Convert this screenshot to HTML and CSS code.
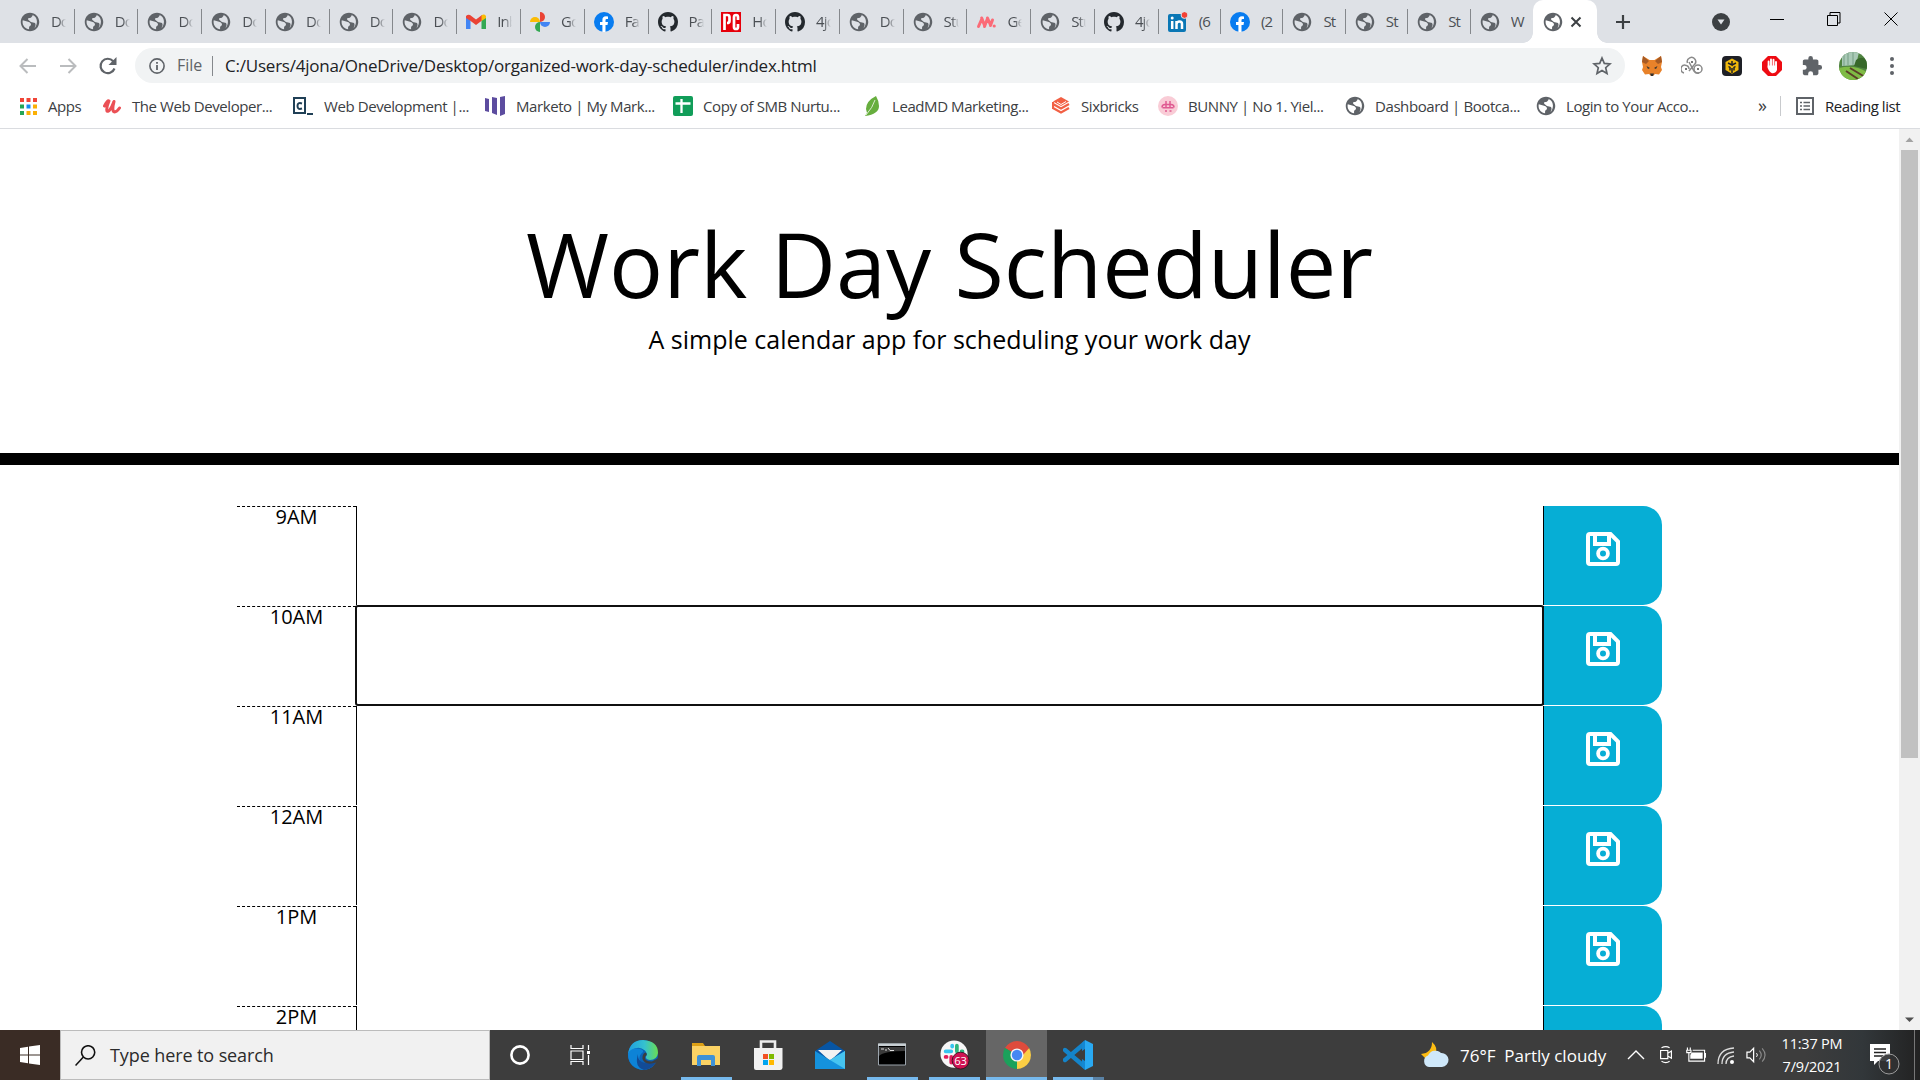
FILE: index.html
```html
<!DOCTYPE html>
<html lang="en">
<head>
<meta charset="utf-8">
<title>Work Day Scheduler</title>
<link rel="stylesheet" href="styles.css">
</head>
<body>
<svg class="defs" width="0" height="0">
  <symbol id="globe" viewBox="1.200 1.200 21.600 21.600"><path fill="#5f6368" d="M12 2C6.480 2 2 6.480 2 12s4.480 10 10 10 10-4.480 10-10S17.520 2 12 2zm-1 17.930c-3.950-.49-7-3.850-7-7.930 0-.62.080-1.210.210-1.790L9 11.500Q12 12 13 14v1c0 1.100-2 1.500-2 2.600v2.330zm6-1.900q2-3 .5-5.030l-4.500-1-3-2.500v-1.500l3-.5 2-2.500-1-.9c3.500.8 5.500 4 5.500 7.400 0 2.600-1 5-2 6.530z"/></symbol>
  <symbol id="github" viewBox="0 0 16 16"><path fill="#24292e" fill-rule="evenodd" d="M8 0C3.580 0 0 3.580 0 8c0 3.540 2.290 6.530 5.470 7.590.4.070.55-.17.55-.38 0-.19-.01-.82-.01-1.490-2.010.37-2.530-.49-2.690-.94-.09-.23-.48-.94-.82-1.130-.28-.15-.68-.52-.01-.53.63-.01 1.080.58 1.230.82.72 1.210 1.870.87 2.330.66.070-.52.280-.87.510-1.070-1.780-.2-3.640-.89-3.640-3.950 0-.87.310-1.590.82-2.150-.08-.2-.36-1.020.08-2.120 0 0 .67-.21 2.200.82.64-.18 1.320-.27 2-.27s1.360.09 2 .27c1.530-1.040 2.200-.82 2.200-.82.44 1.100.16 1.920.08 2.120.51.56.82 1.270.82 2.150 0 3.070-1.870 3.750-3.650 3.950.29.25.54.73.54 1.480 0 1.070-.01 1.930-.01 2.200 0 .21.15.46.55.38A8.010 8.010 0 0 0 16 8c0-4.420-3.580-8-8-8z"/></symbol>
  <symbol id="facebook" viewBox="0 0 20 20"><circle cx="10" cy="10" r="10" fill="#087cf0"/><path d="M8.400 20V13H6V10H8.400V8Q8.400 4.300 12 4.300L14 4.500V7H12.600Q11.500 7 11.500 8.200V10H14L13.500 13H11.500V20Z" fill="#fff"/></symbol>
  <symbol id="gmail" viewBox="0 0 20 16"><path d="M0 2V15H4.500V6Z" fill="#4285f4"/><path d="M15.500 6V15H20V2Z" fill="#34a853"/><path d="M0 2Q2 0 4 1L10 5.500 16 1V6.500L10 11 4 6.500 0 4Z" fill="#ea4335"/><path d="M15.500 1.500Q18-.5 20 2V4L15.500 7Z" fill="#fbbc04"/></symbol>
  <symbol id="photos" viewBox="0 0 20 20"><path d="M10 0A5 5 0 0 1 10 10Z" fill="#ea4335"/><path d="M20 10A5 5 0 0 1 10 10Z" fill="#4285f4"/><path d="M10 20A5 5 0 0 1 10 10Z" fill="#34a853"/><path d="M0 10A5 5 0 0 1 10 10Z" fill="#fbbc04"/></symbol>
  <symbol id="pc" viewBox="0 0 20 20"><path d="M0 0H20V20H0Z" fill="#e6000b"/><path d="M3.500 18V3H6.500Q8.500 3 8.500 5V9Q8.500 11 6 11M17 8V5Q17 3 15 3T13 5V15Q13 17 15 17T17 15V12" fill="none" stroke="#fff" stroke-width="2.700"/></symbol>
  <symbol id="monday" viewBox="0 0 20 16"><path d="M2.500 12.500 6 4.500M8.500 12.500 11.500 4.500M5.700 4 8.700 12M11.500 4 14.500 11M14.500 11.500 16.500 6" fill="none" stroke="#fb6b77" stroke-width="3" stroke-linecap="round"/><circle cx="18.200" cy="12" r="1.600" fill="#fb6b77"/></symbol>
  <symbol id="linkedin" viewBox="0 0 20 20"><rect y="2" width="18" height="18" rx="2" fill="#0a77b5"/><path d="M4.200 9V17M8.500 17V9M8.500 17V12Q9 9.500 11.500 9.500T14 12V17" fill="none" stroke="#fff" stroke-width="2.500"/><circle cx="4.200" cy="6" r="1.500" fill="#fff"/><circle cx="16.500" cy="3" r="3.400" fill="#f34235" stroke="#dee1e6"/></symbol>
  <symbol id="disk" viewBox="0 0 34 34"><path d="M4 2H24.500L32 9.500V30Q32 32 30 32H4Q2 32 2 30V4Q2 2 4 2ZM9 2V12H23V2" fill="none" stroke="#fff" stroke-width="4"/><circle cx="17" cy="21.500" r="4.900" fill="none" stroke="#fff" stroke-width="3.800"/></symbol>
</svg>

<header class="browser">
  <div class="tabs">
    <div class="tab"><svg><use href="#globe"/></svg><span>Do</span></div>
    <div class="tab"><svg><use href="#globe"/></svg><span>Do</span></div>
    <div class="tab"><svg><use href="#globe"/></svg><span>Do</span></div>
    <div class="tab"><svg><use href="#globe"/></svg><span>Do</span></div>
    <div class="tab"><svg><use href="#globe"/></svg><span>Do</span></div>
    <div class="tab"><svg><use href="#globe"/></svg><span>Do</span></div>
    <div class="tab"><svg><use href="#globe"/></svg><span>Do</span></div>
    <div class="tab"><svg><use href="#gmail"/></svg><span>Inb</span></div>
    <div class="tab"><svg><use href="#photos"/></svg><span>Go</span></div>
    <div class="tab"><svg><use href="#facebook"/></svg><span>Fa</span></div>
    <div class="tab"><svg><use href="#github"/></svg><span>Pa</span></div>
    <div class="tab"><svg><use href="#pc"/></svg><span>Ho</span></div>
    <div class="tab"><svg><use href="#github"/></svg><span>4jo</span></div>
    <div class="tab"><svg><use href="#globe"/></svg><span>Do</span></div>
    <div class="tab"><svg><use href="#globe"/></svg><span>Stu</span></div>
    <div class="tab"><svg><use href="#monday"/></svg><span>Ge</span></div>
    <div class="tab"><svg><use href="#globe"/></svg><span>Stu</span></div>
    <div class="tab"><svg><use href="#github"/></svg><span>4jo</span></div>
    <div class="tab narrow"><svg><use href="#linkedin"/></svg><span>(6</span></div>
    <div class="tab narrow"><svg><use href="#facebook"/></svg><span>(2</span></div>
    <div class="tab narrow"><svg><use href="#globe"/></svg><span>St</span></div>
    <div class="tab narrow"><svg><use href="#globe"/></svg><span>St</span></div>
    <div class="tab narrow"><svg><use href="#globe"/></svg><span>St</span></div>
    <div class="tab narrow last"><svg><use href="#globe"/></svg><span>W</span></div>
    <div class="tab active"><svg><use href="#globe"/></svg><svg class="close" viewBox="0 0 12 12"><path d="M1.500 1.500 10.500 10.500M10.500 1.500 1.500 10.500" stroke="#3c4043" stroke-width="2"/></svg></div>
    <svg class="plus" viewBox="0 0 16 16"><path d="M8 1V15M1 8H15" stroke="#3c4043" stroke-width="2.200"/></svg>
    <svg class="tabsearch" viewBox="0 0 18 18"><circle cx="9" cy="9" r="9" fill="#3c4043"/><path d="M5.500 6.500H12.500L9 11.500Z" fill="#dee1e6"/></svg>
    <svg class="win min" viewBox="0 0 14 14"><path d="M0 7.500H14" stroke="#000"/></svg>
    <svg class="win max" viewBox="0 0 14 14"><path d="M.5 3.500H10.500V13.500H.5ZM3 3.500V.5H13V11H10.500" fill="none" stroke="#000"/></svg>
    <svg class="win" viewBox="0 0 14 14"><path d="M.5.5 13.500 13.500M13.500.5.5 13.500" stroke="#000"/></svg>
  </div>

  <div class="toolbar">
    <svg class="nav" viewBox="0 0 20 20"><path d="M18 10H3M9.500 3 2.500 10 9.500 17" fill="none" stroke="#babcbe" stroke-width="2"/></svg>
    <svg class="nav" viewBox="0 0 20 20"><path d="M2 10H17M10.500 3 17.500 10 10.500 17" fill="none" stroke="#babcbe" stroke-width="2"/></svg>
    <svg class="nav" viewBox="0 0 20 20"><path d="M16.500 12.500A7.200 7.200 0 1 1 15.200 5.200L17 7" fill="none" stroke="#5f6368" stroke-width="2.200"/><path d="M18.500 1V9H10.500Z" fill="#5f6368"/></svg>
    <div class="address">
      <svg class="info" viewBox="0 0 16 16"><circle cx="8" cy="8" r="7.100" fill="none" stroke="#5f6368" stroke-width="1.600"/><path d="M8 7V12M8 4V5.700" stroke="#5f6368" stroke-width="1.800"/></svg>
      <span class="scheme">File</span>
      <span class="url">C:/Users/4jona/OneDrive/Desktop/organized-work-day-scheduler/index.html</span>
      <svg class="star" viewBox="0 0 20 20"><path d="M10 2 12.300 7.400 18 7.900 13.700 11.700 15 17.400 10 14.400 5 17.400 6.300 11.700 2 7.900 7.700 7.400Z" fill="none" stroke="#5f6368" stroke-width="1.700"/></svg>
    </div>
    <div class="extensions">
      <svg viewBox="0 0 22 20"><path d="M2 0 8.500 4H13.500L20 0 21 6 20 11 21 14 18 18.500 14 18 12 20H10L8 18 4 18.500 1 14 2 11 1 6Z" fill="#e8822a"/><path d="M2 0 8 5 5 8 1 6ZM20 0 14 5 17 8 21 6Z" fill="#a65a24"/><path d="M5.500 10 9 12 7 13ZM16.500 10 13 12 15 13ZM9 17.500H13L12 20H10Z" fill="#333"/></svg>
      <svg viewBox="0 0 22 20"><g fill="none" stroke="#8a8a8a" stroke-width="1.500"><path d="M6.500 7A4.200 4.200 0 1 1 13 9L8 15M3 17A4 4 0 1 1 8 13"/><circle cx="17" cy="13" r="4"/><path d="M8 6 13 15Q15 18 18 17"/></g><path d="M4 13H6M10 6H12M16 13H18" stroke="#777" stroke-width="2"/></svg>
      <svg viewBox="0 0 22 22"><rect x="1" y="1" width="20" height="20" rx="4" fill="#1e2026"/><path d="M11 3.500 17.500 7V15L11 18.800 4.500 15V7Z" fill="#f0b90b"/><path d="M11 6V10L7 8M11 10 15 8M7.500 11.500 9 12.500V15.500M14.500 11.500 13 12.500V15.500M11 13V18" fill="none" stroke="#1e2026" stroke-width="1.500"/></svg>
      <svg viewBox="0 0 22 22"><path d="M7 1H15L21 7V15L15 21H7L1 15V7Z" fill="#ee0b12"/><path d="M7.600 12V6.500M10 11V4.500M12.500 11V4.700M15 12V7" stroke="#fff" stroke-width="1.900" stroke-linecap="round"/><path d="M6.700 10.500H16V15Q14.500 18.500 11 18.200 8.500 17.500 6.700 13Z" fill="#fff"/></svg>
      <svg viewBox="0 0 24 24"><path fill="#5f6368" d="M20.500 11H19V7c0-1.100-.9-2-2-2h-4V3.500a2.500 2.500 0 0 0-5 0V5H4c-1.100 0-2 .9-2 2v3.800h1.500a2.700 2.700 0 0 1 0 5.400H2V20c0 1.100.9 2 2 2h3.800v-1.500a2.700 2.700 0 0 1 5.400 0V22H17c1.100 0 2-.9 2-2v-4h1.500a2.500 2.500 0 0 0 0-5z"/></svg>
    </div>
    <svg class="avatar" viewBox="0 0 28 28"><defs><clipPath id="round"><circle cx="14" cy="14" r="14"/></clipPath></defs><g clip-path="url(#round)"><path d="M0 0H28V28H0Z" fill="#4f8340"/><path d="M3 0H20L17 13 3 14Z" fill="#a9c9b6"/><path d="M5 0V14M9 0V13M14 0V13" stroke="#7fa68d" stroke-width="1.200"/><path d="M17 8Q24 3 28 9V17L15 14Z" fill="#37682a"/><path d="M0 16Q15 12 28 20V28H0Z" fill="#7fbb45"/><path d="M7 19 19 27M11 16 26 25" stroke="#5b4028" stroke-width="2"/></g></svg>
    <svg class="kebab" viewBox="0 0 6 20"><g fill="#5f6368"><circle cx="3" cy="3" r="2"/><circle cx="3" cy="10" r="2"/><circle cx="3" cy="17" r="2"/></g></svg>
  </div>

  <nav class="bookmarks">
    <a class="bm apps"><svg viewBox="0 0 17 17"><path d="M0 0H4V4H0ZM6.500 0H10.500V4H6.500ZM13 0H17V4H13Z" fill="#f04437"/><path d="M0 6.500H4V10.500H0ZM0 13H4V17H0Z" fill="#25a556"/><path d="M6.500 6.500H10.500V10.500H6.500Z" fill="#168bf0"/><path d="M13 6.500H17V10.500H13ZM6.500 13H10.500V17H6.500ZM13 13H17V17H13Z" fill="#fbb005"/></svg><span>Apps</span></a>
    <a class="bm udemy"><svg viewBox="0 0 18 18"><path d="M1.500 9Q4.500 3 6 4 3 11 4 14 6.500 16 11 4.500 9 12 10.500 14.500 13 16 16.500 11" fill="none" stroke="#eb5055" stroke-width="3" stroke-linecap="round" stroke-linejoin="round"/></svg><span>The Web Developer...</span></a>
    <a class="bm webdev"><svg viewBox="0 0 20 20"><path d="M1 2H12V17H1Z" fill="none" stroke="#204056" stroke-width="2"/><path d="M9 7.500Q4.500 6 4.500 10T9 12.500M14 18H20" fill="none" stroke="#204056" stroke-width="2"/></svg><span>Web Development |...</span></a>
    <a class="bm marketo"><svg viewBox="0 0 20 20"><path d="M0 2 4 3V16L0 15ZM7 1 12 2V19L7 17ZM15 1 20 0V18L15 20Z" fill="#5c4c9f"/></svg><span>Marketo | My Mark...</span></a>
    <a class="bm sheets"><svg viewBox="0 0 20 20"><rect width="20" height="20" rx="2" fill="#119d59"/><path d="M2.500 7.500H17.500M8.500 3V17" stroke="#fff" stroke-width="2.300"/></svg><span>Copy of SMB Nurtu...</span></a>
    <a class="bm lead"><svg viewBox="0 0 16 20"><path d="M11 0Q1 5 1 13L2 17 0 20Q14 18 14 10 14 5 11 0Z" fill="#67ae3e"/><path d="M1 19Q8 11 10 4" fill="none" stroke="#dceccf"/></svg><span>LeadMD Marketing...</span></a>
    <a class="bm six"><svg viewBox="0 0 18 18"><path d="M9 0 17 4.500 9 9 1 4.500Z" fill="#f26044"/><path d="M1 7 9 11.500 17 7M1 11 9 15.500 17 11M1 5V12M5 5 10 2" fill="none" stroke="#f26044" stroke-width="2.200"/><path d="M5 5 9 7.500 14 4.500" stroke="#fff" fill="none"/></svg><span>Sixbricks</span></a>
    <a class="bm bunny"><svg viewBox="0 0 20 20"><circle cx="10" cy="10" r="10" fill="#f9ccd6"/><path d="M8 5V12M12 5V12M4 11.500Q4 8.500 7 8.500H13Q16 8.500 16 11.500M4.500 11.800H15.500M7 15H9M11.500 15H13.500" fill="none" stroke="#df5a91" stroke-width="1.500"/></svg><span>BUNNY | No 1. Yiel...</span></a>
    <a class="bm dash"><svg><use href="#globe"/></svg><span>Dashboard | Bootca...</span></a>
    <a class="bm login"><svg><use href="#globe"/></svg><span>Login to Your Acco...</span></a>
    <span class="more">»</span>
    <a class="bm reading"><svg viewBox="0 0 18 18"><path d="M1 1H17V17H1Z" fill="none" stroke="#5f6368" stroke-width="2"/><path d="M4 5.500H6M7.500 5.500H14M4 9H6M7.500 9H14M4 12.500H6M7.500 12.500H14" stroke="#5f6368" stroke-width="1.600"/></svg><span>Reading list</span></a>
  </nav>
</header>

<main class="viewport">
  <div class="page">
    <section class="hero">
      <h1>Work Day Scheduler</h1>
      <p>A simple calendar app for scheduling your work day</p>
    </section>
    <section class="schedule">
      <div class="row"><div class="hour">9AM</div><div class="entry"></div><div class="save"><svg><use href="#disk"/></svg></div></div>
      <div class="row"><div class="hour">10AM</div><div class="entry focused"></div><div class="save"><svg><use href="#disk"/></svg></div></div>
      <div class="row"><div class="hour">11AM</div><div class="entry"></div><div class="save"><svg><use href="#disk"/></svg></div></div>
      <div class="row"><div class="hour">12AM</div><div class="entry"></div><div class="save"><svg><use href="#disk"/></svg></div></div>
      <div class="row"><div class="hour">1PM</div><div class="entry"></div><div class="save"><svg><use href="#disk"/></svg></div></div>
      <div class="row"><div class="hour">2PM</div><div class="entry"></div><div class="save"><svg><use href="#disk"/></svg></div></div>
    </section>
  </div>
  <div class="scrollbar">
    <svg viewBox="0 0 21 21"><path d="M6.500 13H14.500L10.500 8.500Z" fill="#a3a3a3"/></svg>
    <div class="thumb"></div>
    <svg viewBox="0 0 21 21"><path d="M6 8.500H15L10.500 13Z" fill="#505050"/></svg>
  </div>
</main>

<footer class="taskbar">
  <div class="start"><svg viewBox="0 0 20 20"><path d="M0 3 8 1.800V9.500H0ZM9 1.600 20 0V9.500H9ZM0 10.500H8V18.200L0 17ZM9 10.500H20V20L9 18.400Z" fill="#fff"/></svg></div>
  <div class="search"><svg viewBox="0 0 20 20"><circle cx="12.500" cy="7" r="6.300" fill="none" stroke="#111" stroke-width="1.500"/><path d="M8 11.500.5 19.500" stroke="#111" stroke-width="1.500"/></svg><span>Type here to search</span></div>
  <div class="task"><svg class="s20" viewBox="0 0 20 20"><circle cx="10" cy="10" r="8.600" fill="none" stroke="#fff" stroke-width="2.600"/></svg></div>
  <div class="task"><svg class="s20" viewBox="0 0 20 20"><path d="M1 0V3.500H13V0M1 6H13V14.500H1ZM1 20V16.500H13V20M18.500 0V5M18.500 10V20" fill="none" stroke="#fff" stroke-width="1.200"/><path d="M17 6H20V9H17Z" fill="#fff"/></svg></div>
  <div class="task big edge"><svg viewBox="0 0 30 30"><defs><linearGradient id="eg" x1="0" x2="1"><stop offset="0" stop-color="#1f9ee0"/><stop offset=".55" stop-color="#35c1cf"/><stop offset="1" stop-color="#6ade52"/></linearGradient></defs><circle cx="15" cy="15" r="15" fill="#0b63b7"/><path d="M0 14Q2 0 15 0 30 1 30 13 29 20 22 20 17 19 18 16.500 20 14 17 10.500 10 5 3 11Z" fill="url(#eg)"/><path d="M0 14Q2 8 9 8.500 16 9 15 12 9 17 13 23 17 28 25 26 19 31 12 29.500 0 26 0 14Z" fill="#0d83d7"/><path d="M10 14Q9 26 28 22 24 29 16 30 6 27 10 14Z" fill="#124b96"/><path d="M17.500 16Q15 21 24 21.500L30.500 18 28.500 22.500Q17 26 14.500 19Q14 14 17.500 12.500 20 14 17.500 16Z" fill="#3d3d3d"/></svg></div>
  <div class="task big running"><svg viewBox="0 0 30 30"><path d="M1 3H12L14 6H29V25H1Z" fill="#dda015"/><path d="M1 6H29V25H1Z" fill="#fbd264"/><path d="M6 26V17Q6 15 8 15H22Q24 15 24 17V26H20V20H10V26Z" fill="#3f91d6"/></svg></div>
  <div class="task big"><svg viewBox="0 0 30 30"><path d="M8 9V1.500H22V9" fill="none" stroke="#eee" stroke-width="2.600"/><path d="M1 8H29.500V28Q29 30 27 30H3Q1 30 1 28Z" fill="#f1f1f1"/><path d="M10 14H15V19H10Z" fill="#f25022"/><path d="M16 14H21V19H16Z" fill="#7fba00"/><path d="M10 20H15V25H10Z" fill="#00a4ef"/><path d="M16 20H21V25H16Z" fill="#ffb900"/></svg></div>
  <div class="task big"><svg viewBox="0 0 30 30"><path d="M0 11 15 1 30 11V17H0Z" fill="#0755a4"/><path d="M3 10H27L15 21Z" fill="#f2f2f2"/><path d="M0 11 15 20 30 11V29H0Z" fill="#1592dd"/><path d="M15 20 30 11V29Z" fill="#46c4f0"/></svg></div>
  <div class="task big running"><svg viewBox="0 0 30 30"><path d="M1.500 4H28.500V25H1.500Z" fill="#000" stroke="#9ba4ac"/><path d="M1 3.500H29V6H1Z" fill="#c7ced2"/><path d="M2 16Q7 11 28 11V7H2Z" fill="#3b3b3b"/><path d="M4 9H7M9 9V11M11 8 13 10.500H17" stroke="#ddd" fill="none"/></svg></div>
  <div class="task big running slack"><svg viewBox="0 0 32 32"><circle cx="15" cy="15" r="14.500" fill="#f7f7f7"/><g stroke-width="4" stroke-linecap="round"><path d="M6 12H12M13 6V7" stroke="#36c5f0"/><path d="M18 6V12M23 12H24" stroke="#2eb67d"/><path d="M12 18V24M6 18H7" stroke="#e01e5a"/><path d="M18 18H23" stroke="#ecb22e"/></g><circle cx="22" cy="22" r="9" fill="#cf1252" stroke="#3b1020"/><text class="badge" x="22" y="26.300" text-anchor="middle">63</text></svg></div>
  <div class="task big running current"><svg viewBox="0 0 30 30"><path d="M15 15 2.900 8A14 14 0 0 1 27.100 8Z" fill="#de4b3c"/><path d="M15 15 27.100 8A14 14 0 0 1 15 29Z" fill="#fbce44"/><path d="M15 15V29A14 14 0 0 1 2.900 8Z" fill="#1ba15b"/><path d="M15 8H27.100L21 15Z" fill="#de4b3c"/><path d="M9 18.500 2.900 8 9 12Z" fill="#1ba15b"/><path d="M21 18.500 15 29 15 21Z" fill="#fbce44"/><circle cx="15" cy="15" r="6.600" fill="#f5f5f5"/><circle cx="15" cy="15" r="5.200" fill="#4587f2"/></svg></div>
  <div class="task big running code"><svg viewBox="0 0 30 30"><path d="M2 10 22 27M2 20 22 3" stroke="#1484ca" stroke-width="4.400" stroke-linecap="round"/><path d="M22 0 30 4V26L22 30Z" fill="#29a9f2"/><path d="M22 0V9L19 11V3ZM22 30V21L19 19V27Z" fill="#1487d2"/></svg></div>
  <div class="weather"><svg viewBox="0 0 28 26"><path d="M11 0Q18 6 14 13L4 16 0 12Q11 11 11 0Z" fill="#fdbd13"/><path d="M8 25A6 6 0 0 1 7 13.500 8 8 0 0 1 20 11 7 7 0 1 1 21 25Z" fill="#cfe8fa"/></svg><span>76°F&nbsp; Partly cloudy</span></div>
  <div class="tray">
    <svg viewBox="0 0 18 18"><path d="M1 13 9 5 17 13" fill="none" stroke="#fff" stroke-width="1.400"/></svg>
    <svg viewBox="0 0 18 20"><path d="M3 5H11V14H3ZM11 8 15 5.500V13.500L11 11M4 2Q9-.5 13 2M4 17Q9 20 13 17" fill="none" stroke="#fff" stroke-width="1.300"/></svg>
    <svg viewBox="0 0 21 16"><path d="M6 5.500H17.500V12H4.500V8Z" fill="#fff"/><path d="M3 9V14.500H19.500V3H7M20.500 6V11M1.500 0V3M4.500 0V3M.8 3V5.500H5.200V3ZM3 6V9" fill="none" stroke="#fff" stroke-width="1.200"/></svg>
    <svg viewBox="0 0 18 18"><g fill="none" stroke="#ddd" stroke-width="1.300"><path d="M1 18Q1 3 17 2M5 18Q5 7 17 6M9 18Q9 11 17 10"/></g><circle cx="15" cy="16" r="2" fill="#fff"/></svg>
    <svg viewBox="0 0 21 18"><path d="M1 6H4L8 2V16L4 12H1Z" fill="none" stroke="#fff" stroke-width="1.300"/><path d="M11 7Q13 9 11 11" fill="none" stroke="#fff"/><path d="M14 4.500Q18 9 14 13.500M17 2Q23 9 17 16" fill="none" stroke="#8a8a8a" stroke-width="1.200"/></svg>
  </div>
  <div class="clock"><span>11:37 PM</span><span>7/9/2021</span></div>
  <div class="notify"><svg viewBox="0 0 32 32"><path d="M1 1H21V18H9L5 22V18H1Z" fill="#fff"/><path d="M5 6H17M5 9.500H17M5 13H14" stroke="#222" stroke-width="1.300"/><circle cx="20" cy="21" r="10" fill="#303132" fill-opacity=".92" stroke="#9b9b9b"/><text class="count" x="20" y="26" text-anchor="middle">1</text></svg></div>
</footer>
</body>
</html>
```
FILE: styles.css
```css
* { box-sizing: border-box; }
body { margin: 0; width: 1920px; height: 1080px; overflow: hidden; background: #fff; color: #000; font-family: "Open Sans", "Noto Sans", sans-serif; display: flex; flex-direction: column; }
svg { display: block; flex: none; }
.defs { position: absolute; }
span { white-space: nowrap; }

/* Browser chrome */
.browser { height: 129px; border-bottom: 1px solid #dadce0; flex: none; }
.tabs { height: 43px; background: #dee1e6; display: flex; align-items: center; padding-left: 10.9px; }
.tab { width: 63.77px; height: 25px; flex: none; display: flex; align-items: center; padding-left: 9px; border-right: 1px solid #85888c; }
.tab svg { width: 20px; height: 20px; }
.tab span { margin: -2px 0 0 11px; width: 15px; overflow: hidden; font-size: 15px; letter-spacing: -.9px; color: #4b4f54; mask-image: linear-gradient(90deg, #000 50%, transparent); }
.tab.narrow { width: 62.4px; }
.tab.narrow span { mask-image: none; }
.tab.last { border-right-color: transparent; }
.tab.active { position: relative; align-self: stretch; height: 43px; border: 0; border-radius: 10px 10px 0 0; background: #fff; padding-left: 10px; }
.tab.active::before, .tab.active::after { content: ""; position: absolute; bottom: 0; width: 10px; height: 10px; }
.tab.active::before { left: -10px; background: radial-gradient(circle at 0 0, transparent 9.5px, #fff 10px); }
.tab.active::after { right: -10px; background: radial-gradient(circle at 100% 0, transparent 9.5px, #fff 10px); }
.tab .close { width: 12px; height: 12px; margin-left: 7px; }
.plus { width: 16px; height: 16px; margin-left: 18px; }
.tabsearch { width: 18px; height: 18px; margin-left: 81px; }
.win { width: 14px; height: 14px; margin: -6px 0 0 43px; }
.win.min { margin-left: 40px; }
.toolbar { height: 45px; display: flex; align-items: center; }
.nav { width: 20px; height: 20px; margin-left: 18px; }
.nav + .nav { margin-left: 20px; }
.address { width: 1490px; height: 35px; margin-left: 17px; border-radius: 18px; background: #f1f3f4; display: flex; align-items: center; padding: 0 13px 0 14px; }
.info { width: 16px; height: 16px; }
.scheme { margin-left: 12px; width: 36px; height: 20px; line-height: 19px; font-size: 16px; letter-spacing: 0; color: #5f6368; border-right: 1px solid #85888c; }
.url { margin-left: 12px; font-size: 17px; letter-spacing: -.22px; color: #202124; }
.star { width: 20px; height: 20px; margin-left: auto; }
.extensions { display: flex; align-items: center; gap: 18px; margin-left: 16px; }
.extensions svg { width: 22px; height: 22px; }
.avatar { width: 28px; height: 28px; margin-left: 16px; }
.kebab { width: 6px; height: 20px; margin-left: 22px; }
.bookmarks { height: 36px; display: flex; align-items: center; font-size: 15px; letter-spacing: -.42px; color: #3c4043; padding-left: 20px; }
.bm { display: flex; align-items: center; gap: 11px; flex: none; }
.bm svg { width: 20px; height: 20px; }
.bm span { line-height: 20px; }
.apps { width: 83px; } .apps svg { width: 17px; height: 17px; }
.udemy { width: 190px; } .udemy svg { width: 18px; }
.webdev { width: 192px; }
.marketo { width: 188px; }
.sheets { width: 192px; } .sheets { gap: 10px; }
.lead { width: 187px; } .lead svg { width: 16px; }
.six { width: 106px; } .six svg { width: 18px; }
.bunny { width: 187px; } .bunny, .dash, .login { gap: 10px; }
.dash { width: 191px; }
.login { width: 222px; }
.more { width: 22px; font-size: 18px; line-height: 20px; padding-bottom: 3px; }
.reading { height: 20px; border-left: 1px solid #c8cacd; padding-left: 15px; color: #202124; }
.reading svg { width: 18px; height: 18px; }

/* Scheduler page */
.viewport { height: 901px; flex: none; display: flex; overflow: hidden; }
.page { width: 1899px; }
.hero { height: 336px; border-bottom: 12px solid #000; text-align: center; padding-top: 80px; }
.hero h1 { margin: 0; font-size: 90px; line-height: 108px; font-weight: 400; }
.hero p { margin: 3px 0 0; font-size: 25px; line-height: 38px; }
.schedule { margin: 41px 237px 0; }
.row { display: grid; grid-template-columns: 119px 1187px 119px; height: 100px; }
.hour { border-top: 1px dashed #000; text-align: center; font-size: 20px; line-height: 20px; }
.entry { height: 99px; border-left: 1px solid #000; }
.entry.focused { height: 101px; margin: -1px -1px 0; border: 2px solid #101010; border-radius: 3px; z-index: 1; }
.save { height: 99px; border-left: 1px solid #000; border-radius: 0 19px 19px 0; background: #06aed5; padding: 26px 0 0 42px; }
.save svg { width: 34px; height: 34px; }
.scrollbar { width: 21px; background: #f1f1f1; display: flex; flex-direction: column; justify-content: space-between; }
.scrollbar svg { width: 21px; height: 21px; }
.thumb { width: 17px; height: 608px; margin: 0 2px auto; background: #c1c1c1; }

/* Desktop taskbar */
.taskbar { height: 50px; flex: none; display: flex; color: #fff; background: linear-gradient(90deg, #3d3d3d 94%, #32373a 97%, #222 100%); }
.start { width: 60px; display: grid; place-items: center; background: #3a2c25; }
.start svg { width: 20px; height: 20px; }
.search { width: 430px; background: #f1f1f1; border: 1px solid #bcbcbc; color: #2b2b2b; display: flex; align-items: center; padding-left: 14px; font-size: 18px; letter-spacing: -.1px; }
.search svg { width: 21px; height: 21px; margin-right: 14px; }
.task { width: 60px; display: grid; place-items: center; }
.s20 { width: 20px; height: 20px; }
.task.big { width: 62px; }
.task.edge { width: 65px; }
.task.slack { width: 63px; }
.task.big svg { width: 30px; height: 30px; }
.running { background: linear-gradient(#76b9ed, #76b9ed) 50% 100% / 51px 3px no-repeat; }
.running.current { width: 61px; background: linear-gradient(#76b9ed, #76b9ed) 0 100% / 61px 3px no-repeat #666; }
.running.code { background: linear-gradient(90deg, #76b9ed 40px, #5a82a5 40px) 50% 100% / 51px 3px no-repeat; }
.badge { font-size: 12px; fill: #fff; }
.weather { margin-left: auto; display: flex; align-items: center; gap: 11px; width: 205px; font-size: 17px; letter-spacing: 0; }
.weather svg { width: 28px; height: 26px; }
.tray { width: 149px; display: flex; align-items: center; gap: 10px; }
.tray svg { width: 20px; height: 18px; }
.clock { width: 74px; display: flex; flex-direction: column; align-items: center; justify-content: center; font-size: 14.5px; line-height: 23px; letter-spacing: -.2px; margin-right: 8px; }
.notify { width: 58px; border-right: 1px solid #777; margin-right: 5px; padding: 13px 0 0 12px; }
.notify svg { width: 32px; height: 32px; }
.count { font-size: 14px; fill: #fff; }
```
